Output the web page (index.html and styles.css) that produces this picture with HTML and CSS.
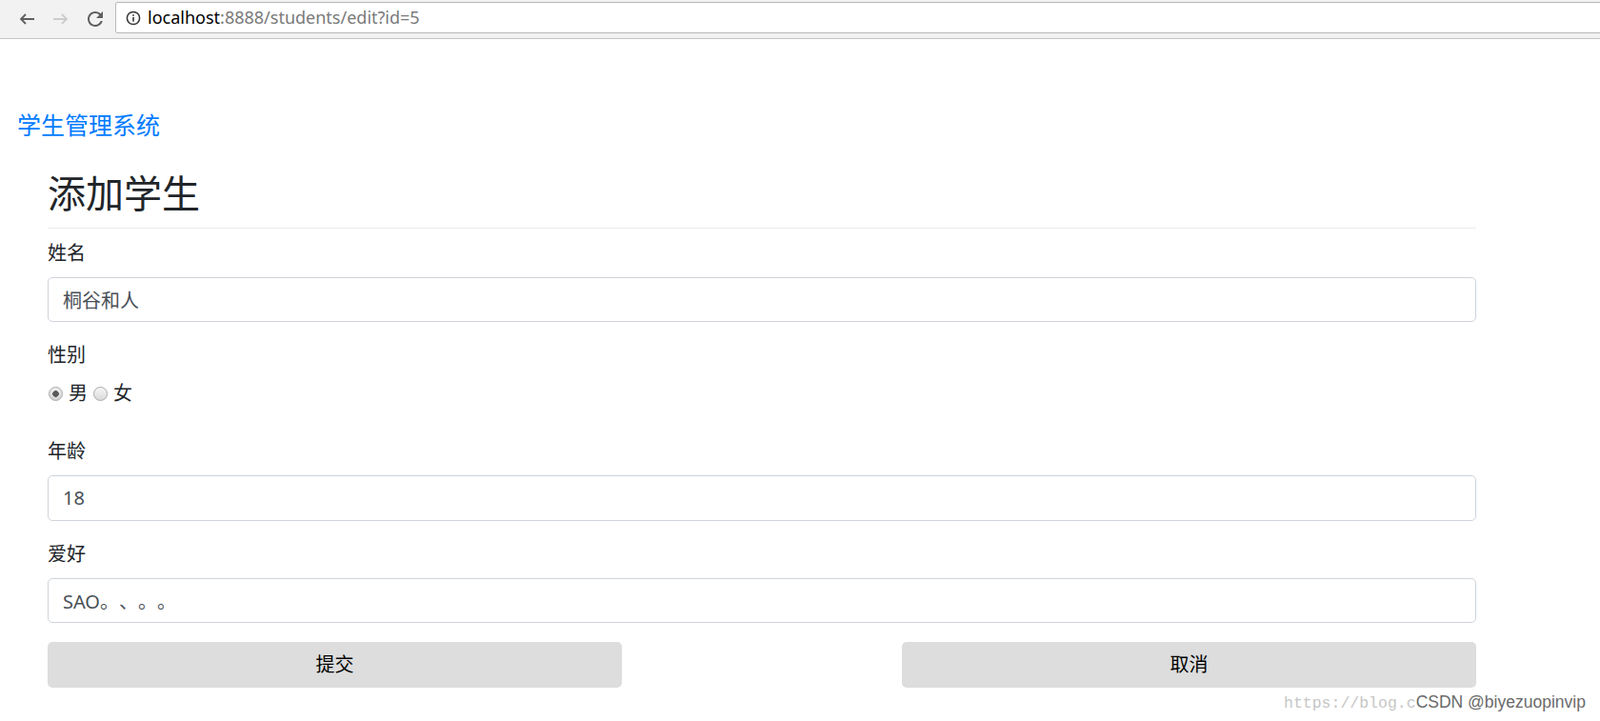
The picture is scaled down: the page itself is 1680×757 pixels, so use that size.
FILE: index.html
```html
<!DOCTYPE html>
<html lang="zh-CN">
<head>
<meta charset="utf-8">
<title>学生管理系统</title>
<link rel="stylesheet" href="styles.css">
</head>
<body>
<div class="chrome">
  <div class="nav-btn">
    <svg width="18" height="14" viewBox="0 0 18 14"><path d="M17 7H3 M8 2L3 7l5 5" fill="none" stroke="#5f5f5f" stroke-width="1.8"/></svg>
  </div>
  <div class="nav-btn">
    <svg width="18" height="14" viewBox="0 0 18 14"><path d="M1 7h14 M10 2l5 5-5 5" fill="none" stroke="#cccccc" stroke-width="1.8"/></svg>
  </div>
  <div class="nav-btn">
    <svg width="24" height="24" viewBox="0 0 24 24"><path fill="#5f5f5f" d="M17.65 6.35C16.2 4.9 14.21 4 12 4c-4.42 0-7.99 3.58-7.99 8s3.57 8 7.99 8c3.73 0 6.84-2.55 7.73-6h-2.08c-.82 2.33-3.04 4-5.65 4-3.31 0-6-2.69-6-6s2.69-6 6-6c1.66 0 3.14.69 4.22 1.78L13 11h7V4l-2.35 2.35z"/></svg>
  </div>
  <div class="omnibox">
    <svg class="info" width="16" height="16" viewBox="0 0 16 16"><circle cx="8" cy="8" r="6.6" fill="none" stroke="#333" stroke-width="1.5"/><rect x="7.2" y="7" width="1.6" height="4.6" fill="#333"/><rect x="7.2" y="4.2" width="1.6" height="1.6" fill="#333"/></svg>
    <span class="url"><span class="host">localhost</span>:8888/students/edit?id=5</span>
  </div>
</div>

<div class="page">
  <nav class="navbar"><a class="brand" href="#">学生管理系统</a></nav>
  <div class="container">
    <h2 class="title">添加学生</h2>
    <form class="form">
      <div class="form-group">
        <label class="field-label">姓名</label>
        <input class="form-control" type="text" value="桐谷和人">
      </div>
      <div class="form-group gender">
        <label class="field-label">性别</label>
        <div class="radios">
          <label class="opt"><input class="radio" type="radio" name="sex" checked><span>男</span></label>
          <label class="opt"><input class="radio" type="radio" name="sex"><span>女</span></label>
        </div>
      </div>
      <div class="form-group">
        <label class="field-label">年龄</label>
        <input class="form-control" type="text" value="18">
      </div>
      <div class="form-group">
        <label class="field-label">爱好</label>
        <input class="form-control" type="text" value="SAO。、。。">
      </div>
      <div class="actions">
        <button class="btn" type="button">提交</button>
        <button class="btn" type="button">取消</button>
      </div>
    </form>
  </div>
</div>

<div class="watermark">
  <span class="wm-url">https://blog.c</span><span class="wm-csdn">CSDN @biyezuopinvip</span>
</div>
</body>
</html>
```
FILE: styles.css
```css
html, body {
  margin: 0;
  height: 100%;
  overflow: hidden;
  background: #fff;
}
body {
  position: relative;
  font-family: "Segoe UI", "Noto Sans", "Noto Sans CJK SC", sans-serif;
  font-size: 20px;
  line-height: 1.5;
  color: #212529;
}

/* browser chrome */
.chrome {
  height: 40px;
  background: #f2f2f2;
  border-bottom: 1px solid #c4c4c4;
  display: flex;
  align-items: center;
  padding-left: 10px;
  overflow: hidden;
}
.nav-btn {
  width: 36px;
  height: 40px;
  display: flex;
  align-items: center;
  justify-content: center;
  flex: none;
}
.omnibox {
  align-self: flex-start;
  margin: 2px -10px 0 3px;
  flex: 1;
  height: 33px;
  box-sizing: border-box;
  border: 1px solid #b9b9b9;
  border-radius: 2px;
  background: #fff;
  display: flex;
  align-items: center;
  padding-left: 10px;
}
.info {
  flex: none;
}
.url {
  margin-left: 7px;
  font-family: "Segoe UI", "Noto Sans", sans-serif;
  font-size: 18px;
  color: #7a7a7a;
  white-space: nowrap;
}
.host {
  color: #000;
}

/* page */
.page {
  padding-top: 62px;
}
.navbar {
  padding: 10px 18px;
}
.brand {
  font-size: 25px;
  line-height: 37.5px;
  color: #007bff;
  text-decoration: none;
}
.container {
  margin: 18px 0 0 50px;
  width: 1500px;
}
.title {
  margin: 0;
  font-size: 40px;
  line-height: 48px;
  font-weight: 400;
  padding-bottom: 12px;
  border-bottom: 1px solid #e9ecef;
}
.form {
  margin-top: 11px;
}
.form-group {
  margin-bottom: 20px;
}
.gender {
  margin-bottom: 31px;
}
.field-label {
  display: block;
  line-height: 30px;
  margin-bottom: 10px;
}
.form-control {
  display: block;
  width: 100%;
  box-sizing: border-box;
  height: 47.5px;
  padding: 0 15px;
  border: 1px solid #ced4da;
  border-radius: 5px;
  font: inherit;
  font-size: 20px;
  color: #495057;
  background: #fff;
  text-spacing-trim: space-all;
}
.radios {
  display: flex;
  align-items: center;
  height: 30px;
}
.opt {
  display: flex;
  align-items: center;
}
.opt + .opt {
  margin-left: 6px;
}
.radio {
  -webkit-appearance: none;
  appearance: none;
  width: 15px;
  height: 15px;
  margin: 0 6px 0 1px;
  border-radius: 50%;
  border: 1px solid #a9a9a9;
  box-sizing: border-box;
  background: linear-gradient(#f6f6f6, #dadada);
}
.opt + .opt .radio {
  margin-left: 0;
}
.radio:checked {
  background: radial-gradient(circle, #5a5a5a 0 3px, transparent 3.6px), linear-gradient(#eeeeee, #d2d2d2);
}
.actions {
  display: flex;
  justify-content: space-between;
}
.btn {
  width: 603px;
  height: 47.5px;
  border: 0;
  border-radius: 5px;
  background: #dddddd;
  font: inherit;
  font-size: 20px;
  color: #000;
  padding: 0;
}

/* watermark overlay */
.watermark {
  position: absolute;
  left: 1348px;
  top: 729px;
  white-space: nowrap;
  display: flex;
  align-items: baseline;
}
.wm-url {
  font-family: "Liberation Mono", monospace;
  font-size: 16.5px;
  line-height: 16.5px;
  color: #c6c6c6;
}
.wm-csdn {
  font-family: "Liberation Sans", Arial, sans-serif;
  font-size: 17.5px;
  line-height: 16px;
  color: #6a6a6a;
  text-shadow: 0 0 2px #fff, 1px 1px 0 #fff, -1px -1px 0 #fff;
}
```
